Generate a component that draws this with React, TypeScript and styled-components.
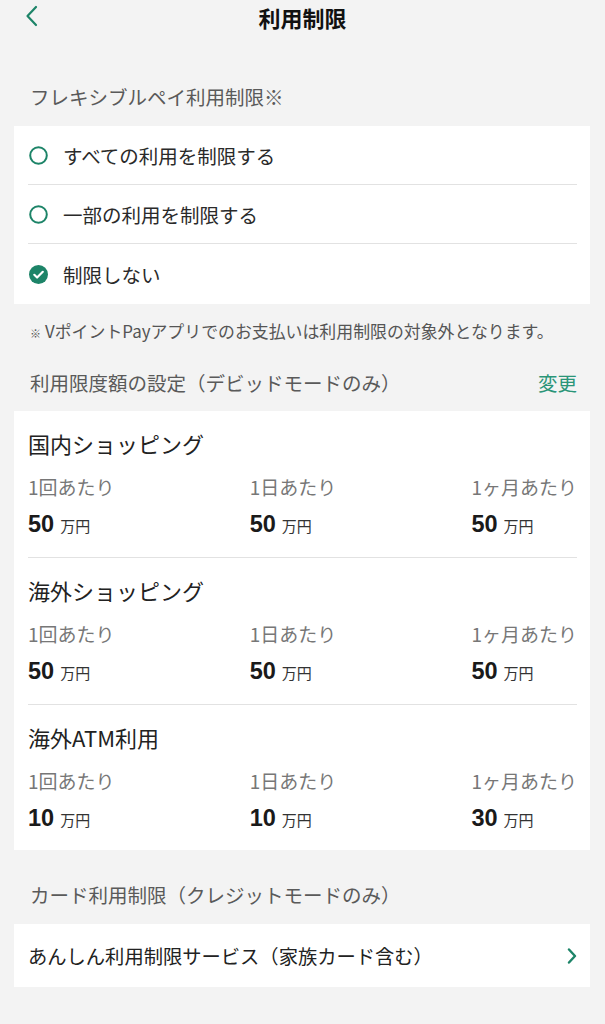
import React from "react";
import styled, { createGlobalStyle } from "styled-components";

const GREEN = "#1d8468";

const Global = createGlobalStyle`
  html, body { margin: 0; padding: 0; background: #f3f3f3; }
  body { font-family: "Noto Sans CJK JP", "Noto Sans", sans-serif; color: #222; }
`;

const Page = styled.div`
  width: 605px;
  min-height: 1024px;
  background: #f3f3f3;
  display: flex;
  flex-direction: column;
`;

const Header = styled.header`
  height: 34px;
  display: flex;
  align-items: center;
  justify-content: center;
  position: relative;
`;

const BackButton = styled.button`
  position: absolute;
  left: 19px;
  top: 3px;
  width: 24px;
  height: 26px;
  border: 0;
  background: transparent;
  padding: 0;
  display: flex;
  align-items: center;
  justify-content: center;
`;

const Title = styled.h1`
  margin: 0;
  font-size: 22px;
  font-weight: 700;
  color: #111;
  line-height: 30px;
`;

const SectionHead = styled.div<{ $top: number; $bottom: number }>`
  display: flex;
  justify-content: space-between;
  align-items: center;
  padding: ${(p) => p.$top}px 28px ${(p) => p.$bottom}px 30px;
`;

const SectionLabel = styled.span`
  font-size: 19.5px;
  line-height: 26px;
  color: #5a5a5a;
`;

const ChangeLink = styled.span`
  font-size: 19.5px;
  line-height: 26px;
  color: #2a9578;
`;

const Card = styled.div`
  margin: 0 15px 0 14px;
  background: #fff;
  padding: 0 13px 0 14px;
`;

const RadioRow = styled.div<{ $last?: boolean }>`
  height: ${(p) => (p.$last ? 60 : 58)}px;
  display: flex;
  align-items: center;
  gap: 15px;
  padding-left: 1px;
  border-bottom: ${(p) => (p.$last ? "none" : "1px solid #e2e2e2")};
`;

const RadioText = styled.span`
  font-size: 19.5px;
  color: #2a2a2a;
`;

const Note = styled.p`
  margin: 0;
  padding: 16px 20px 0 30px;
  font-size: 16.9px;
  line-height: 22px;
  color: #555;
  white-space: nowrap;
`;

const NoteMark = styled.span`
  font-size: 11px;
  margin-right: 4px;
`;

const Group = styled.div<{ $last?: boolean }>`
  padding: 17px 0 ${(p) => (p.$last ? 17 : 18)}px;
  border-bottom: ${(p) => (p.$last ? "none" : "1px solid #e2e2e2")};
  display: flex;
  flex-direction: column;
`;

const GroupTitle = styled.div`
  font-size: 22px;
  line-height: 30px;
  height: 30px;
  color: #222;
  margin-bottom: 15px;
`;

const Cols = styled.div`
  display: flex;
  justify-content: space-between;
`;

const Col = styled.div`
  display: flex;
  flex-direction: column;
  gap: 8px;
`;

const ColLabel = styled.span`
  font-size: 19px;
  line-height: 28px;
  height: 28px;
  color: #777;
`;

const Value = styled.span`
  height: 30px;
  display: flex;
  align-items: baseline;
  gap: 6px;
`;

const Amount = styled.span`
  font-family: "Liberation Sans", "Noto Sans CJK JP", sans-serif;
  font-size: 23.5px;
  line-height: 30px;
  font-weight: 700;
  color: #1a1a1a;
`;

const Unit = styled.span`
  font-size: 15px;
  line-height: 30px;
  color: #333;
`;

const LinkRow = styled.div`
  height: 63px;
  display: flex;
  align-items: center;
  justify-content: space-between;
`;

const LinkText = styled.span`
  font-size: 19.3px;
  color: #222;
`;

const Radio = ({ checked }: { checked?: boolean }) =>
  checked ? (
    <svg width="19" height="19" viewBox="0 0 19 19">
      <circle cx="9.5" cy="9.5" r="9.5" fill={GREEN} />
      <path d="M5.3 9.8l2.8 2.7L13.8 6.8" fill="none" stroke="#fff" strokeWidth="2.2" strokeLinecap="round" strokeLinejoin="round" />
    </svg>
  ) : (
    <svg width="19" height="19" viewBox="0 0 19 19">
      <circle cx="9.5" cy="9.5" r="8.3" fill="none" stroke={GREEN} strokeWidth="2" />
    </svg>
  );

const limits = [
  { title: "国内ショッピング", values: ["50", "50", "50"] },
  { title: "海外ショッピング", values: ["50", "50", "50"] },
  { title: "海外ATM利用", values: ["10", "10", "30"] },
];
const colLabels = ["1回あたり", "1日あたり", "1ヶ月あたり"];

export default function App() {
  return (
    <Page>
      <Global />
      <Header>
        <BackButton aria-label="戻る">
          <svg width="13" height="22" viewBox="0 0 13 22">
            <path d="M11 2L2.5 11L11 20" fill="none" stroke={GREEN} strokeWidth="2.2" strokeLinecap="round" strokeLinejoin="round" />
          </svg>
        </BackButton>
        <Title>利用制限</Title>
      </Header>

      <SectionHead $top={50} $bottom={16}>
        <SectionLabel>フレキシブルペイ利用制限※</SectionLabel>
      </SectionHead>
      <Card>
        <RadioRow>
          <Radio />
          <RadioText>すべての利用を制限する</RadioText>
        </RadioRow>
        <RadioRow>
          <Radio />
          <RadioText>一部の利用を制限する</RadioText>
        </RadioRow>
        <RadioRow $last>
          <Radio checked />
          <RadioText>制限しない</RadioText>
        </RadioRow>
      </Card>

      <Note>
        <NoteMark>※</NoteMark>VポイントPayアプリでのお支払いは利用制限の対象外となります。
      </Note>

      <SectionHead $top={26} $bottom={15}>
        <SectionLabel>利用限度額の設定（デビッドモードのみ）</SectionLabel>
        <ChangeLink>変更</ChangeLink>
      </SectionHead>
      <Card>
        {limits.map((g, i) => (
          <Group key={g.title} $last={i === limits.length - 1}>
            <GroupTitle>{g.title}</GroupTitle>
            <Cols>
              {g.values.map((v, j) => (
                <Col key={j}>
                  <ColLabel>{colLabels[j]}</ColLabel>
                  <Value>
                    <Amount>{v}</Amount>
                    <Unit>万円</Unit>
                  </Value>
                </Col>
              ))}
            </Cols>
          </Group>
        ))}
      </Card>

      <SectionHead $top={32} $bottom={16}>
        <SectionLabel>カード利用制限（クレジットモードのみ）</SectionLabel>
      </SectionHead>
      <Card>
        <LinkRow>
          <LinkText>あんしん利用制限サービス（家族カード含む）</LinkText>
          <svg width="10" height="16" viewBox="0 0 10 16">
            <path d="M2 1.5L8 8L2 14.5" fill="none" stroke={GREEN} strokeWidth="2.4" strokeLinecap="round" strokeLinejoin="round" />
          </svg>
        </LinkRow>
      </Card>
    </Page>
  );
}
